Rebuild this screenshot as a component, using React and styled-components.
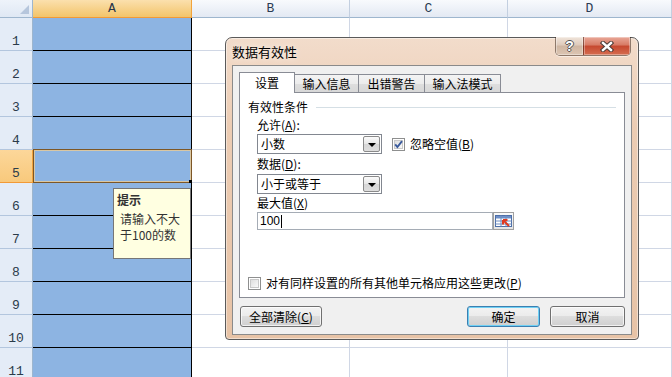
import React from 'react';
import styled, { createGlobalStyle } from 'styled-components';

const CJK = `"Noto Sans CJK SC", "Liberation Sans", sans-serif`;

const Global = createGlobalStyle`
  html, body { margin: 0; padding: 0; overflow: hidden; background: #fff; }
  body { font-family: ${CJK}; }
  * { box-sizing: border-box; }
`;

const Page = styled.div`
  position: relative;
  width: 672px;
  height: 377px;
  overflow: hidden;
  background: #fff;
`;

/* ---------- spreadsheet ---------- */
const Sheet = styled.div`
  display: grid;
  grid-template-columns: 33px 159px 158px 158px 164px;
  grid-template-rows: 18px repeat(11, 33px);
`;

const Corner = styled.div`
  position: relative;
  background: linear-gradient(#eef3fa, #dfe8f4);
  border-right: 1px solid #9eb6ce;
  border-bottom: 1px solid #9eb6ce;
  &::after {
    content: '';
    position: absolute;
    right: 3px;
    bottom: 3px;
    border-left: 9px solid transparent;
    border-bottom: 9px solid #b6c6dc;
  }
`;

const ColHeader = styled.div`
  display: flex;
  align-items: center;
  justify-content: center;
  font-family: "Liberation Mono", monospace;
  font-size: 13px;
  color: ${p => (p.$active ? '#27364a' : '#2b3b52')};
  background: ${p =>
    p.$active
      ? 'linear-gradient(#fbe0ad, #f2c46a)'
      : 'linear-gradient(#f8fafd, #e3e9f3)'};
  border-right: 1px solid ${p => (p.$active ? '#f2a33b' : '#c3cfe0')};
  border-bottom: 1px solid ${p => (p.$active ? '#f29a36' : '#9eb6ce')};
  ${p => p.$active && 'border-left: 1px solid #f2a33b; margin-left: -1px;'}
`;

const RowHeader = styled.div`
  display: flex;
  align-items: flex-end;
  justify-content: center;
  padding-bottom: 2px;
  font-family: "Liberation Mono", monospace;
  font-size: 13px;
  line-height: 13px;
  color: #2b3b4a;
  background: ${p => (p.$active ? 'linear-gradient(#fcd79a, #f8c97c)' : '#e4ecf7')};
  border-right: 1px solid ${p => (p.$active ? '#f2a33b' : '#9eb6ce')};
  border-bottom: 1px solid ${p => (p.$active ? '#f29a36' : '#b3c6de')};
`;

const Cell = styled.div`
  position: relative;
  background: ${p => (p.$filled ? '#8db4e2' : '#fff')};
  border-right: 1px solid ${p => (p.$filled ? '#000' : '#d0d7e5')};
  border-bottom: 1px solid ${p => (p.$filled ? '#000' : '#d0d7e5')};
`;

const Selection = styled.div`
  position: absolute;
  left: 0;
  right: -1px;
  top: -1px;
  bottom: -1px;
  border: 1px solid #7d5726;
  box-shadow: inset 0 0 0 1px #d9c7a4;
  pointer-events: none;
`;

const FillHandle = styled.div`
  position: absolute;
  right: -3px;
  bottom: -3px;
  width: 5px;
  height: 5px;
  background: #000;
`;

/* ---------- input tooltip ---------- */
const Tip = styled.div`
  position: absolute;
  left: 113px;
  top: 188px;
  width: 78px;
  height: 71px;
  background: #ffffe1;
  border: 1px solid #767676;
  padding: 2px 0 0 3px;
  color: #333;
  font-size: 12px;
`;

const TipTitle = styled.div`
  font-weight: bold;
  line-height: 18px;
  margin-bottom: 2px;
`;

const TipLine = styled.div`
  line-height: 16px;
  padding-left: 3px;
`;

/* ---------- dialog ---------- */
const Dialog = styled.div`
  position: absolute;
  left: 225px;
  top: 37px;
  width: 414px;
  height: 303px;
  border: 1px solid #5a5a5a;
  border-radius: 7px 7px 4px 4px;
  background: linear-gradient(to bottom, #f2dccb 0%, #ecccb3 30%, #e7c3a6 100%);
  box-shadow: inset 0 0 0 1px rgba(255, 255, 255, 0.45);
  padding: 0 6px 4px 6px;
  display: flex;
  flex-direction: column;
`;

const TitleBar = styled.div`
  height: 27px;
  display: flex;
  align-items: flex-start;
`;

const TitleText = styled.div`
  flex: 1;
  align-self: center;
  font-size: 13px;
  line-height: 16px;
  color: #000;
  padding-top: 1px;
  text-shadow: 0 0 6px rgba(255, 255, 255, 0.9);
`;

const CaptionGroup = styled.div`
  display: flex;
  margin-top: -1px;
  margin-right: 1px;
  border: 1px solid rgba(60, 40, 30, 0.55);
  border-top: none;
  border-radius: 0 0 5px 5px;
  overflow: hidden;
  box-shadow: 0 1px 0 rgba(255, 255, 255, 0.5);
`;

const CaptionBtn = styled.div`
  width: ${p => p.$w}px;
  height: 18px;
  display: flex;
  align-items: center;
  justify-content: center;
  background: ${p =>
    p.$close
      ? 'linear-gradient(#e9a898 0%, #d77a64 45%, #c6482f 50%, #d56d50 100%)'
      : 'linear-gradient(#f0e4da 0%, #decabb 45%, #cfb6a2 50%, #dcc5b2 100%)'};
  border-left: ${p => (p.$close ? '1px solid rgba(60,30,20,0.5)' : 'none')};
  box-shadow: inset 0 0 0 1px rgba(255, 255, 255, 0.35);
`;

const HelpGlyph = styled.span`
  font-family: "Liberation Sans", sans-serif;
  font-weight: bold;
  font-size: 14px;
  line-height: 14px;
  color: #fff;
  text-shadow: 1px 0 0 #555, -1px 0 0 #555, 0 1px 0 #555, 0 -1px 0 #555;
`;

const Client = styled.div`
  flex: 1;
  background: #f0f0f0;
  border: 1px solid #8a8a8a;
  padding: 6px 6px 7px 6px;
  display: flex;
  flex-direction: column;
  font-size: 12px;
  color: #000;
`;

const TabRow = styled.div`
  height: 20px;
  display: flex;
  align-items: flex-end;
  position: relative;
  z-index: 1;
`;

const Tab = styled.div`
  width: ${p => p.$w}px;
  height: ${p => (p.$active ? 21 : 18)}px;
  margin-bottom: ${p => (p.$active ? -1 : 0)}px;
  margin-left: ${p => (p.$first ? 0 : -1)}px;
  display: flex;
  align-items: center;
  justify-content: center;
  line-height: 14px;
  padding-top: ${p => (p.$active ? 0 : 1)}px;
  border: 1px solid #898c95;
  border-bottom: none;
  background: ${p =>
    p.$active
      ? '#fff'
      : 'linear-gradient(#f4f4f4 0%, #ececec 50%, #dedede 51%, #d8d8d8 100%)'};
  position: relative;
  z-index: ${p => (p.$active ? 2 : 1)};
`;

const Panel = styled.div`
  height: 206px;
  background: #fff;
  border: 1px solid #898c95;
  padding: 6px 0 7px 8px;
  display: flex;
  flex-direction: column;
`;

const Group = styled.div`
  height: 16px;
  display: flex;
  align-items: center;
  padding-right: 8px;
`;

const GroupTitle = styled.span`
  line-height: 16px;
`;

const GroupRule = styled.div`
  flex: 1;
  height: 1px;
  margin-left: 8px;
  background: #d5dfe5;
`;

const Fields = styled.div`
  padding-left: 9px;
  display: flex;
  flex-direction: column;
`;

const FieldLabel = styled.div`
  height: ${p => p.$h}px;
  display: flex;
  align-items: center;
  line-height: 14px;
`;

const FieldRow = styled.div`
  display: flex;
  align-items: center;
`;

const Select = styled.div`
  width: 125px;
  height: 20px;
  border: 1px solid #828790;
  background: #fff;
  display: flex;
  align-items: center;
  padding-left: 3px;
  padding-right: 1px;
`;

const SelectValue = styled.span`
  flex: 1;
  line-height: 14px;
`;

const DropBtn = styled.div`
  width: 17px;
  height: 16px;
  border: 1px solid #8a8a8a;
  border-radius: 2px;
  background: linear-gradient(#fbfbfb, #e6e6e6 50%, #d6d6d6 51%, #dedede);
  display: flex;
  align-items: center;
  justify-content: center;
  &::after {
    content: '';
    border-left: 4px solid transparent;
    border-right: 4px solid transparent;
    border-top: 4px solid #000;
    margin-top: 1px;
  }
`;

const CheckLabel = styled.div`
  display: flex;
  align-items: center;
  margin-left: ${p => p.$ml}px;
  gap: 5px;
  line-height: 14px;
`;

const TextBox = styled.div`
  width: 236px;
  height: 18px;
  border: 1px solid #a5acb5;
  background: #fff;
  display: flex;
  align-items: center;
  padding-left: 2px;
  font-family: "Liberation Sans", sans-serif;
  font-size: 12px;
`;

const Caret = styled.span`
  display: inline-block;
  width: 1px;
  height: 13px;
  background: #000;
  margin-left: 1px;
`;

const RefBtn = styled.div`
  width: 21px;
  height: 18px;
  border: 1px solid #a0a0a0;
  background: linear-gradient(#fafafa, #e4e4e4);
  display: flex;
  align-items: center;
  justify-content: center;
`;

const Spacer = styled.div`
  flex: 1;
`;

const Footer = styled.div`
  margin-top: 8px;
  height: 21px;
  display: flex;
  align-items: stretch;
`;

const Button = styled.div`
  width: ${p => p.$w}px;
  margin-left: ${p => p.$ml || 0}px;
  display: flex;
  align-items: center;
  justify-content: center;
  line-height: 14px;
  border: 1px solid ${p => (p.$default ? '#3c7fb1' : '#707070')};
  border-radius: 3px;
  background: linear-gradient(#f3f3f3 0%, #ebebeb 48%, #dddddd 50%, #cfcfcf 100%);
  box-shadow: inset 0 0 0 1px ${p => (p.$default ? '#6fd0f4' : 'rgba(255,255,255,0.7)')};
`;

const FooterGap = styled.div`
  flex: 1;
`;

function CheckBox({ checked }) {
  return (
    <svg width="13" height="13" viewBox="0 0 13 13" style={{ flex: 'none' }}>
      <defs>
        <linearGradient id={checked ? 'cbg1' : 'cbg2'} x1="0" y1="0" x2="1" y2="1">
          <stop offset="0" stopColor="#dcdcdc" />
          <stop offset="1" stopColor="#fbfbfb" />
        </linearGradient>
      </defs>
      <rect x="0.5" y="0.5" width="12" height="12" fill="#fff" stroke="#8e8f8f" />
      <rect x="2.5" y="2.5" width="8" height="8" fill={`url(#${checked ? 'cbg1' : 'cbg2'})`} stroke="#c8c8c8" />
      {checked && (
        <path d="M3.2 6.4 L5.4 9 L10 3.2" fill="none" stroke="#3a5a9c" strokeWidth="1.9" />
      )}
    </svg>
  );
}

function CloseGlyph() {
  return (
    <svg width="14" height="11" viewBox="0 0 14 11">
      <path d="M3 2 L11 9 M11 2 L3 9" stroke="#4a3a36" strokeWidth="4.4" strokeLinecap="square" />
      <path d="M3 2 L11 9 M11 2 L3 9" stroke="#fff" strokeWidth="2.4" strokeLinecap="square" />
    </svg>
  );
}

function RefIcon() {
  return (
    <svg width="17" height="12" viewBox="0 0 17 12">
      <rect x="0.5" y="0.5" width="16" height="11" fill="#fff" stroke="#4d6fa8" />
      <rect x="1" y="1" width="15" height="2.5" fill="#6e8fc8" />
      <path d="M0.5 6 H16.5 M0.5 9 H16.5 M6 0.5 V11.5 M11 0.5 V11.5" stroke="#6f8dc0" strokeWidth="1" />
      <path d="M8 5 L14 11 M8 5 L8 9.5 M8 5 L12.5 5" stroke="#e03a20" strokeWidth="2" fill="none" />
    </svg>
  );
}

const rows = Array.from({ length: 11 }, (_, i) => i + 1);

export default function App() {
  return (
    <>
      <Global />
      <Page>
        <Sheet>
          <Corner />
          <ColHeader $active>A</ColHeader>
          <ColHeader>B</ColHeader>
          <ColHeader>C</ColHeader>
          <ColHeader>D</ColHeader>
          {rows.map(r => (
            <React.Fragment key={r}>
              <RowHeader $active={r === 5}>{r}</RowHeader>
              <Cell $filled>
                {r === 5 && (
                  <Selection>
                    <FillHandle />
                  </Selection>
                )}
              </Cell>
              <Cell />
              <Cell />
              <Cell />
            </React.Fragment>
          ))}
        </Sheet>

        <Tip>
          <TipTitle>提示</TipTitle>
          <TipLine>请输入不大</TipLine>
          <TipLine>于100的数</TipLine>
        </Tip>

        <Dialog>
          <TitleBar>
            <TitleText>数据有效性</TitleText>
            <CaptionGroup>
              <CaptionBtn $w={27}>
                <HelpGlyph>?</HelpGlyph>
              </CaptionBtn>
              <CaptionBtn $w={47} $close>
                <CloseGlyph />
              </CaptionBtn>
            </CaptionGroup>
          </TitleBar>
          <Client>
            <TabRow>
              <Tab $active $first $w={56}>设置</Tab>
              <Tab $w={65}>输入信息</Tab>
              <Tab $w={67}>出错警告</Tab>
              <Tab $w={77}>输入法模式</Tab>
            </TabRow>
            <Panel>
              <Group>
                <GroupTitle>有效性条件</GroupTitle>
                <GroupRule />
              </Group>
              <Fields>
                <FieldLabel $h={19}>允许(<u>A</u>):</FieldLabel>
                <FieldRow>
                  <Select>
                    <SelectValue>小数</SelectValue>
                    <DropBtn />
                  </Select>
                  <CheckLabel $ml={10}>
                    <CheckBox checked />
                    <span>忽略空值(<u>B</u>)</span>
                  </CheckLabel>
                </FieldRow>
                <FieldLabel $h={20}>数据(<u>D</u>):</FieldLabel>
                <FieldRow>
                  <Select>
                    <SelectValue>小于或等于</SelectValue>
                    <DropBtn />
                  </Select>
                </FieldRow>
                <FieldLabel $h={18}>最大值(<u>X</u>)</FieldLabel>
                <FieldRow>
                  <TextBox>
                    100
                    <Caret />
                  </TextBox>
                  <RefBtn>
                    <RefIcon />
                  </RefBtn>
                </FieldRow>
              </Fields>
              <Spacer />
              <CheckLabel $ml={0}>
                <CheckBox />
                <span>对有同样设置的所有其他单元格应用这些更改(<u>P</u>)</span>
              </CheckLabel>
            </Panel>
            <Footer>
              <Button $w={82} $ml={1}>全部清除(<u>C</u>)</Button>
              <FooterGap />
              <Button $w={73} $default>确定</Button>
              <Button $w={75} $ml={10}>取消</Button>
            </Footer>
          </Client>
        </Dialog>
      </Page>
    </>
  );
}
